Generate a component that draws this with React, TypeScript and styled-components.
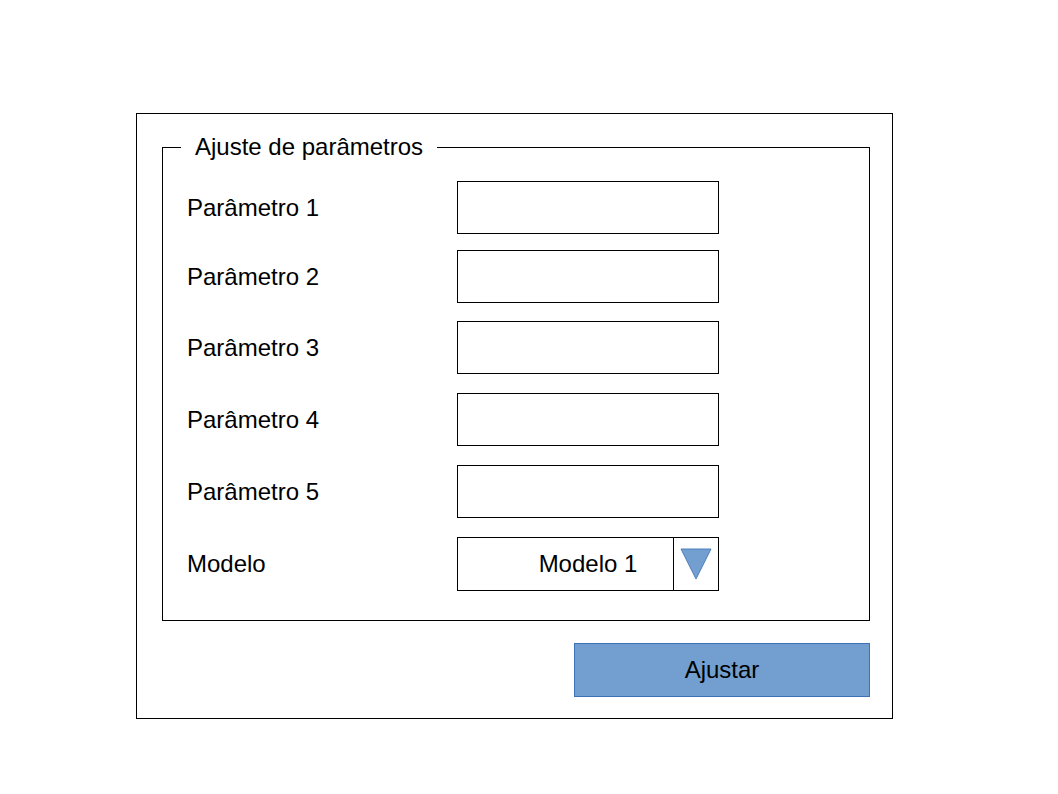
import React from "react";
import styled, { createGlobalStyle } from "styled-components";

const GlobalStyle = createGlobalStyle`
  html, body {
    margin: 0;
    padding: 0;
    background: #ffffff;
  }
  body {
    font-family: "Liberation Sans", Arial, sans-serif;
    color: #000000;
  }
`;

const Page = styled.div`
  padding: 113px 0 0 136px;
`;

const Dialog = styled.div`
  box-sizing: border-box;
  width: 757px;
  height: 606px;
  border: 1px solid #000000;
  padding: 19px 22px 21px 25px;
  display: flex;
  flex-direction: column;
  align-items: flex-end;
`;

const Group = styled.fieldset`
  box-sizing: border-box;
  width: 708px;
  margin: 0;
  border: 1px solid #000000;
  padding: 20px 0 29px 0;
  min-inline-size: 0;
`;

const Legend = styled.legend`
  margin-left: 18px;
  padding: 0 14px;
  font-size: 24px;
  line-height: 28px;
`;

const Form = styled.div`
  display: grid;
  grid-template-columns: 270px 262px;
  padding-left: 24px;
`;

const Row = styled.div<{ $gap: number }>`
  display: contents;
  & > * {
    margin-top: ${(p) => p.$gap}px;
  }
`;

const Label = styled.label`
  height: 53px;
  display: flex;
  align-items: center;
  font-size: 24px;
`;

const Field = styled.div`
  box-sizing: border-box;
  height: 53px;
  border: 1px solid #000000;
  background: #ffffff;
`;

const Select = styled.div`
  box-sizing: border-box;
  position: relative;
  height: 54px;
  border: 1px solid #000000;
  display: flex;
  align-items: center;
  justify-content: center;
  font-size: 24px;
`;

const ArrowCell = styled.div`
  position: absolute;
  top: 0;
  right: 0;
  bottom: 0;
  width: 44px;
  border-left: 1px solid #000000;
  display: flex;
  align-items: center;
  justify-content: center;
`;

const ActionButton = styled.button`
  box-sizing: border-box;
  margin-top: 22px;
  width: 296px;
  height: 54px;
  background: #729fcf;
  border: 1px solid #3d72b4;
  font-family: "Liberation Sans", Arial, sans-serif;
  font-size: 24px;
  color: #000000;
  padding: 0;
`;

const params = [
  { label: "Parâmetro 1", gap: 0 },
  { label: "Parâmetro 2", gap: 16 },
  { label: "Parâmetro 3", gap: 18 },
  { label: "Parâmetro 4", gap: 19 },
  { label: "Parâmetro 5", gap: 19 },
];

export default function App() {
  return (
    <>
      <GlobalStyle />
      <Page>
        <Dialog>
          <Group>
            <Legend>Ajuste de parâmetros</Legend>
            <Form>
              {params.map((p) => (
                <Row key={p.label} $gap={p.gap}>
                  <Label>{p.label}</Label>
                  <Field />
                </Row>
              ))}
              <Row $gap={19}>
                <Label>Modelo</Label>
                <Select>
                  Modelo 1
                  <ArrowCell>
                    <svg width="32" height="32" viewBox="0 0 32 32">
                      <polygon
                        points="1,1 31,1 16,31"
                        fill="#729fcf"
                        stroke="#4f7fbd"
                        strokeWidth="1"
                      />
                    </svg>
                  </ArrowCell>
                </Select>
              </Row>
            </Form>
          </Group>
          <ActionButton>Ajustar</ActionButton>
        </Dialog>
      </Page>
    </>
  );
}
